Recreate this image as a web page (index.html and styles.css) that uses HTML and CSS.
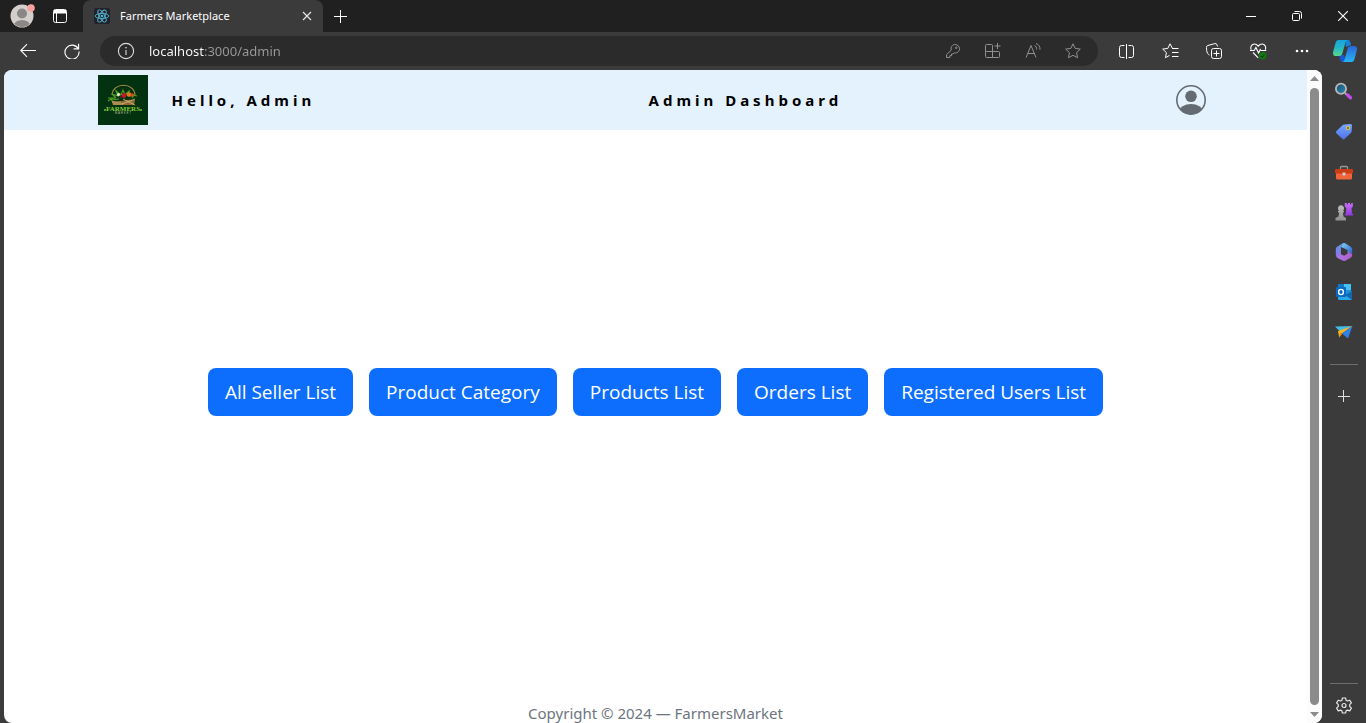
FILE: index.html
```html
<!DOCTYPE html>
<html lang="en">
<head>
<meta charset="utf-8">
<meta name="viewport" content="width=device-width, initial-scale=1">
<title>Farmers Marketplace</title>
<link rel="stylesheet" href="styles.css">
</head>
<body>
<div class="browser">
  <header class="titlebar">
    <button class="profile" aria-label="Profile">
      <svg width="26" height="26" viewBox="0 0 26 26"><defs><clipPath id="face"><circle cx="13" cy="13" r="11"/></clipPath></defs><circle cx="13" cy="13" r="11.5" fill="#d3d0cc"/><g clip-path="url(#face)" fill="#8a8886"><circle cx="13" cy="10.500" r="5"/><ellipse cx="13" cy="22.500" rx="8" ry="5.500"/></g><circle cx="22" cy="5" r="3.800" fill="#f9a19a"/></svg>
    </button>
    <button class="tab-menu" aria-label="Tab actions">
      <svg width="14" height="14" viewBox="0 0 14 14" fill="none" stroke="#fff"><rect x=".5" y=".5" width="13" height="13" rx="2"/><path d="M1 2h12M1 3.500h12" stroke-width="2"/><path d="M3.500 4v9.500"/></svg>
    </button>
    <div class="tab">
      <svg width="16" height="16" viewBox="0 0 16 16"><rect width="16" height="16" rx="2" fill="#20232a"/><g fill="none" stroke="#53b4d1" stroke-width=".9"><ellipse cx="8" cy="8" rx="6.800" ry="2.600"/><ellipse cx="8" cy="8" rx="6.800" ry="2.600" transform="rotate(60 8 8)"/><ellipse cx="8" cy="8" rx="6.800" ry="2.600" transform="rotate(120 8 8)"/></g><circle cx="8" cy="8" r="1.300" fill="#53b4d1"/></svg>
      <span class="tab-title">Farmers Marketplace</span>
      <button class="tab-close" aria-label="Close tab"><svg width="10" height="10" viewBox="0 0 10 10" stroke="#e6e6e6" stroke-width="1.200"><path d="M1 1l8 8M9 1L1 9"/></svg></button>
    </div>
    <button class="new-tab" aria-label="New tab"><svg width="13" height="13" viewBox="0 0 13 13" stroke="#fff"><path d="M6.500 0v13M0 6.500h13"/></svg></button>
    <div class="window-buttons">
      <button aria-label="Minimize"><svg width="10" height="10" viewBox="0 0 10 10" stroke="#fff"><path d="M0 5.500h10"/></svg></button>
      <button aria-label="Restore"><svg width="10" height="10" viewBox="0 0 10 10" fill="none" stroke="#fff"><rect x=".5" y="2.500" width="7" height="7" rx="1"/><path d="M2.500.5h5a2 2 0 0 1 2 2v5"/></svg></button>
      <button aria-label="Close"><svg width="10" height="10" viewBox="0 0 10 10" stroke="#fff" stroke-width="1.100"><path d="M0 0l10 10M10 0L0 10"/></svg></button>
    </div>
  </header>

  <div class="toolbar">
    <button class="tool" aria-label="Back"><svg width="16" height="14" viewBox="0 0 16 14" fill="none" stroke="#fff" stroke-width="1.100"><path d="M16 6.500H.8M7 .2L.8 6.500 7 12.800"/></svg></button>
    <button class="tool" aria-label="Refresh"><svg width="16" height="16" viewBox="0 0 17 17" fill="none" stroke="#fff" stroke-width="1.200"><path d="M15.300 6.500A7.500 7.500 0 1 0 16 9"/><path d="M15.500.7v5.600h-5.300"/></svg></button>
    <div class="address">
      <svg width="20" height="20" viewBox="0 0 20 20" fill="none" stroke="#ddd" stroke-width="1.100"><circle cx="10" cy="10" r="7.600"/><path d="M10 9v5"/><circle cx="10" cy="6.700" r=".5" fill="#ddd" stroke-width=".6"/></svg>
      <input class="url" type="text" value="localhost:3000/admin" aria-label="Address">
      <button class="hint" aria-label="Saved passwords"><svg width="14" height="14" viewBox="0 0 14 14" fill="none" stroke="#929292"><path d="M5.300 6.100C4.300 2.800 6.500.5 9.200.5c2.300 0 4.300 2 4.300 4.300 0 2.700-2.300 4.800-5.300 4L7 10H5.500v1.700H3.800v1.800H.5v-2.700z"/><circle cx="10.200" cy="3.800" r=".8"/></svg></button>
      <button class="hint" aria-label="Apps"><svg width="16" height="16" viewBox="0 0 16 16" fill="none" stroke="#929292"><path d="M7.500 8.500v6h6a1 1 0 0 0 1-1v-4a1 1 0 0 0-1-1zM7.500 8.500h-6a1 1 0 0 0-1 1v4a1 1 0 0 0 1 1h6M7.500 8.500v-6a1 1 0 0 0-1-1h-5a1 1 0 0 0-1 1v7M12.500 0v6M9.500 3h6"/></svg></button>
      <button class="hint" aria-label="Read aloud"><svg width="16" height="16" viewBox="0 0 16 16" fill="none" stroke="#929292"><path d="M1.100 14.500L6 2.500l5 12M2.800 10.500h6.500M9.500 2.500c1.500.8 2.200 2 2.200 4M11 .5c2.800 1 4.200 3.200 4 6.200"/></svg></button>
      <button class="hint" aria-label="Add to favorites"><svg width="16" height="16" viewBox="0 0 16 16" fill="none" stroke="#929292" stroke-linejoin="round"><path d="M8 .8l2.200 4.600 5.100.7-3.700 3.500.9 5.100L8 12.300l-4.500 2.400.9-5.100L.7 6.100l5.100-.7z"/></svg></button>
    </div>
    <button class="tool" aria-label="Split screen"><svg width="15" height="15" viewBox="0 0 15 15" fill="none" stroke="#fff"><path d="M5.500 1.500h-3a2 2 0 0 0-2 2v8a2 2 0 0 0 2 2h3M9.500 1.500h3a2 2 0 0 1 2 2v8a2 2 0 0 1-2 2h-3M7.500 0v15"/></svg></button>
    <button class="tool" aria-label="Favorites"><svg width="17" height="16" viewBox="0 0 17 16" fill="none" stroke="#fff" stroke-linejoin="round"><path d="M10.500 5.500L8 .8 5.800 5.400.7 6.100l3.700 3.500-.9 5.100 4-2.300M10 5.500h6.500M10 9.500h6.500M10 13.500h6.500"/></svg></button>
    <button class="tool" aria-label="Collections"><svg width="16" height="16" viewBox="0 0 16 16" fill="none" stroke="#fff"><rect x="5.500" y="5.500" width="10" height="10" rx="2"/><path d="M10.500 7.500v6M7.500 10.500h6M3.500 12C2 11.500.8 9.500.7 7.500L.4 4.700a2 2 0 0 1 1.500-2.200L8.700.6a2 2 0 0 1 2.400 1.500l.5 1.400"/></svg></button>
    <button class="tool" aria-label="Browser essentials"><svg width="17" height="17" viewBox="0 0 17 17" fill="none" stroke="#fff" stroke-width="1.100"><path d="M1.200 6.700C.2 4.300 1.300 1 4.500 1c1.700 0 2.800 1 3.700 2.200C9.200 2 10.300 1 12 1c3.200 0 4.300 3.300 3.300 5.700M3 9.500l5.200 5.300M0 7.500h4.200l1.700-3 2.700 5.500 1.700-3.500.8 1h5.200"/><circle cx="12.700" cy="12.800" r="3.700" fill="#107c10" stroke="none"/><path d="M11 13l1.200 1.200 2.200-2.700" stroke="#0a3d0a"/></svg></button>
    <button class="tool" aria-label="Settings and more"><svg width="14" height="4" viewBox="0 0 14 4" fill="#fff"><circle cx="2" cy="2" r="1.300"/><circle cx="7" cy="2" r="1.300"/><circle cx="12" cy="2" r="1.300"/></svg></button>
    <button class="copilot" aria-label="Copilot"><svg width="24" height="22" viewBox="0 0 24 22"><defs><linearGradient id="cpa" x2="0" y2="1"><stop stop-color="#16a2e0"/><stop offset=".5" stop-color="#23b8c4"/><stop offset="1" stop-color="#58d98c"/></linearGradient><linearGradient id="cpb" x2="0" y2="1"><stop stop-color="#2867dd"/><stop offset="1" stop-color="#27b5f4"/></linearGradient></defs><path d="M6 15h5l2 7H10c-3 0-3-3-4-7z" fill="#1757d5"/><path d="M12 0h3c2 0 2.500 2 3 5l-5 2z" fill="#1683d8"/><path d="M5.500 0H15c-2 0-2.500 2-3 4L9.500 13c-.6 2-1.500 3-3.500 3H3c-2.500 0-3.500-2-2.800-4.500L2.500 3C3 1 4 0 5.500 0z" fill="url(#cpa)"/><path d="M18.500 22H9c2 0 2.500-2 3-4L14.500 9c.6-2 1.500-3 3.500-3h3c2.500 0 3.500 2 2.800 4.500L21.500 19c-.5 2-1.500 3-3 3z" fill="url(#cpb)"/></svg></button>
  </div>

  <div class="workspace">
    <div class="viewport">
      <div class="page">
        <nav class="navbar">
          <div class="navbar-inner">
            <div class="brand">
              <svg class="logo" width="50" height="50" viewBox="0 0 50 50" role="img" aria-label="Farmers Market"><rect width="50" height="50" fill="#02320f"/><path d="M14 20C15 7 36 7 37 20" stroke="#a98a4d" stroke-width="1.100" fill="none"/><path d="M13 25q6 3 11 1t13-1l-1 5H15z" fill="#8f6c34"/><path d="M14 27h9M15 29h10M25 24l12 6M24 29l13-5" stroke="#d8bd7e" stroke-width=".8"/><path d="M10 26q5-4 8-3l-4-4 6 2-2-5 5 4 2-5 2 5 4-4v5l5-1-2 3M10 23h8M35 20l4 1M13 25l8-1" stroke="#4c9c24" stroke-width="1.200" fill="none"/><circle cx="20.500" cy="19.500" r="1.600" fill="#e8e9d6"/><circle cx="26" cy="20.500" r="2.400" fill="#b82021"/><circle cx="31" cy="19.500" r="2.300" fill="#e27a1d"/><circle cx="34" cy="20" r="1.800" fill="#d94c21"/><circle cx="23" cy="22" r="1.500" fill="#591a37"/><text x="25" y="36" text-anchor="middle" class="logo-name">FARMERS</text><text x="25" y="39" text-anchor="middle" class="logo-sub">M A R K E T</text><path d="M6 35h2M42 35h2" stroke="#71bd2c" stroke-width="1.500"/></svg>
              <span class="nav-text">Hello, Admin</span>
            </div>
            <span class="nav-text">Admin Dashboard</span>
            <button class="account" aria-label="Account"><svg width="30" height="30" viewBox="0 0 30 30"><defs><clipPath id="acc"><circle cx="15" cy="15" r="14.500"/></clipPath></defs><g clip-path="url(#acc)" fill="#646b72"><circle cx="15" cy="11.300" r="5.800"/><ellipse cx="15" cy="27" rx="11.800" ry="8"/></g><circle cx="15" cy="15" r="14.200" fill="none" stroke="#646b72" stroke-width="1.600"/></svg></button>
          </div>
        </nav>
        <main class="actions">
          <button class="btn">All Seller List</button>
          <button class="btn">Product Category</button>
          <button class="btn">Products List</button>
          <button class="btn">Orders List</button>
          <button class="btn">Registered Users List</button>
        </main>
        <footer class="footer">Copyright © 2024 — FarmersMarket</footer>
      </div>
      <div class="scrollbar">
        <svg width="9" height="5" viewBox="0 0 9 5" fill="#8b8b8b"><path d="M4.500 0L9 5H0z"/></svg>
        <div class="thumb"></div>
        <svg width="9" height="5" viewBox="0 0 9 5" fill="#8b8b8b"><path d="M4.500 5L9 0H0z"/></svg>
      </div>
    </div>

    <aside class="sidebar">
      <button aria-label="Search"><svg width="20" height="20" viewBox="0 0 20 20"><defs><linearGradient id="sg" x2="1" y2="1"><stop stop-color="#174e70"/><stop offset="1" stop-color="#2f89b4"/></linearGradient></defs><path d="M11 11l2.500 2.500" stroke="#aaa" stroke-width="2"/><path d="M13.500 13l3 2.800" stroke="#c64bea" stroke-width="3.300" stroke-linecap="round"/><circle cx="7" cy="6.800" r="5.100" fill="url(#sg)" stroke="#b9b9b9" stroke-width="1.800"/></svg></button>
      <button aria-label="Shopping"><svg width="20" height="20" viewBox="0 0 20 20"><defs><linearGradient id="tg" x2="0" y2="1"><stop stop-color="#78a9ff"/><stop offset="1" stop-color="#4f70e8"/></linearGradient></defs><path d="M10.500 2.500L16.500 2q1.500 0 1.500 1.500l-.4 5.700q0 1-.8 1.800l-6 5.800q-1.300 1.200-2.500 0L2.500 11.500q-1.200-1.200 0-2.500l6-5.700q.8-.8 2-.8z" fill="url(#tg)"/><circle cx="14" cy="6" r="1.500" fill="#344a92" stroke="#f4ca25" stroke-width="1.200"/></svg></button>
      <button aria-label="Tools"><svg width="20" height="20" viewBox="0 0 20 20"><path d="M6.500 7V5.500q0-1 1-1h5q1 0 1 1V7" fill="none" stroke="#999" stroke-width="1.300"/><path d="M2 10h16v6q0 1.500-1.500 1.500h-13Q2 17.500 2 16z" fill="#ef6438"/><rect x="1" y="7" width="18" height="4.500" rx="1" fill="#cb3d14"/><circle cx="10" cy="12" r="1.700" fill="#ccc"/></svg></button>
      <button aria-label="Games"><svg width="20" height="20" viewBox="0 0 20 20"><defs><linearGradient id="rk" x2="0" y2="1"><stop stop-color="#cc70ff"/><stop offset="1" stop-color="#9038d8"/></linearGradient><linearGradient id="pw" x2="0" y2="1"><stop stop-color="#bcbcbc"/><stop offset="1" stop-color="#909090"/></linearGradient></defs><path d="M10.800 1h2v1.500h1.200V1h2v1.500h1.200V1h1.600v3.700L17.500 6l.4 5.200 1.100.8v1.500h-8V12l1-.8L12.300 6l-1.500-1.300z" fill="url(#rk)"/><path d="M7 3.200a3.200 3.200 0 0 1 2 5.600l1 .2v1.500H8.800l.7 4 2.500 1.500v2.500H1.500V16l3-1.500.7-4H4V9l1-.2a3.200 3.200 0 0 1 2-5.600z" fill="url(#pw)"/></svg></button>
      <button aria-label="Microsoft 365"><svg width="20" height="20" viewBox="0 0 20 20"><defs><linearGradient id="ma" x2="1" y2="1"><stop stop-color="#7ed9f4"/><stop offset="1" stop-color="#2c54c8"/></linearGradient><linearGradient id="mb" x2="1"><stop stop-color="#a878ea"/><stop offset="1" stop-color="#b65cc6"/></linearGradient><linearGradient id="mc" x2="0" y2="1"><stop stop-color="#5a9ae8"/><stop offset="1" stop-color="#9b6ce0"/></linearGradient></defs><path d="M8 1.700q2-1.200 4 0l4.700 3q1.500 1 1.500 2.700V13l-4.700-2.700V8L7 5z" fill="url(#ma)"/><path d="M8 1.700q1-.5 2-.5L7 5v7.500L3.500 16Q1.800 15 1.800 13V7.200q0-1.500 1.300-2.400z" fill="url(#mc)"/><path d="M3 15.700L6.500 12l3.700 1.700 3.500-2.200V9.800l4.500 2.500q.2 2.200-1.200 3.100l-4.800 2.900q-2 1.200-4.200 0z" fill="url(#mb)"/></svg></button>
      <button aria-label="Outlook"><svg width="20" height="20" viewBox="0 0 20 20"><rect x="4" y="2" width="13" height="14" rx="1" fill="#1d91dc"/><path d="M10 2h7v6h-7z" fill="#45c3f3"/><path d="M4 2h6v4H4z" fill="#1579c4"/><path d="M18 9v8q0 1-1 1H5q-1 0-1-1v-2l8-1z" fill="#28a7e8"/><path d="M18 9v9l-7-5z" fill="#1268af"/><rect x="2" y="5" width="10" height="10" rx="1" fill="#0869c4"/><ellipse cx="7" cy="10" rx="2.400" ry="2.600" fill="none" stroke="#fff" stroke-width="1.400"/></svg></button>
      <button aria-label="Drop"><svg width="20" height="20" viewBox="0 0 20 20"><path d="M1 4.500L18.500 4 6 9.500z" fill="#42bce9"/><path d="M18.500 4L4 9l1.200 6.500L8 11.500z" fill="#f8b622"/><path d="M6.500 10.500l2 1-3.300 4z" fill="#da850e"/><path d="M18.500 4L14 16.500 8 11.500z" fill="#2f82e8"/></svg></button>
      <hr class="rule">
      <button aria-label="Customize"><svg width="12" height="12" viewBox="0 0 12 12" stroke="#e0e0e0"><path d="M5.500 0v12M0 6.500h12"/></svg></button>
      <div class="spacer"></div>
      <hr class="rule rule-bottom">
      <button class="gear" aria-label="Settings"><svg width="18" height="18" viewBox="0 0 18 18" fill="none" stroke="#e8e8e8" stroke-width="1.200" stroke-linejoin="round"><path d="M7.400 1h3.200l.5 2.300 1.300.7 2.300-.8 1.700 2.700-1.700 1.700v1.800l1.700 1.700-1.700 2.800-2.300-.8-1.300.7-.5 2.200H7.400l-.5-2.200-1.300-.7-2.300.8-1.700-2.800 1.700-1.700V7.600L1.600 5.900l1.700-2.700 2.300.8 1.300-.7z"/><circle cx="9" cy="8.500" r="2"/></svg></button>
    </aside>
  </div>
</div>
</body>
</html>
```
FILE: styles.css
```css
* { box-sizing: border-box; }

body {
  margin: 0;
  font-family: "Segoe UI", "Noto Sans", "Open Sans", sans-serif;
}

button {
  display: flex;
  align-items: center;
  justify-content: center;
  padding: 0;
  border: 0;
  background: none;
  font: inherit;
  cursor: pointer;
}

svg { display: block; flex: none; }

.browser {
  display: flex;
  flex-direction: column;
  height: 100vh;
  background: #3b3b3b;
}

/* Title bar */
.titlebar {
  display: flex;
  flex: none;
  height: 32px;
  background: #202020;
}
.profile { width: 44px; }
.tab-menu { width: 32px; }
.tab {
  display: flex;
  align-items: center;
  width: 240px;
  margin-left: 7px;
  padding: 0 6px 0 11px;
  gap: 10px;
  border-radius: 8px 8px 0 0;
  background: #3b3b3b;
  color: #fff;
  font-size: 11px;
}
.tab-title { flex: 1; line-height: 16px; white-space: nowrap; }
.tab-close { width: 20px; height: 20px; }
.new-tab { width: 35px; }
.window-buttons { display: flex; margin-left: auto; }
.window-buttons button { width: 46px; }

/* Toolbar */
.toolbar {
  display: flex;
  flex: none;
  align-items: center;
  height: 38px;
  padding-left: 6px;
}
.tool { width: 44px; height: 32px; }
.address {
  display: flex;
  flex: 1;
  align-items: center;
  min-width: 0;
  height: 30px;
  margin: 0 6px;
  padding: 0 5px 0 16px;
  border-radius: 15px;
  background: #2b2b2b;
}
.url {
  flex: 1;
  min-width: 0;
  margin-left: 13px;
  padding: 0;
  border: 0;
  outline: 0;
  font-family: inherit;
  font-size: 13px;
  background: linear-gradient(90deg, #fff 55px, #9a9a9a 55px);
  -webkit-background-clip: text;
  background-clip: text;
  -webkit-text-fill-color: transparent;
}
.hint { width: 40px; height: 30px; }
.copilot { width: 42px; height: 32px; }

/* Web page area */
.workspace {
  display: flex;
  flex: 1;
  min-height: 0;
  padding-left: 4px;
}
.viewport {
  display: flex;
  flex: 1;
  min-width: 0;
  overflow: hidden;
  border-radius: 8px;
  background: #fff;
}
.page {
  display: flex;
  flex: 1;
  flex-direction: column;
  min-width: 0;
}
.navbar { background: #e3f2fd; }
.navbar-inner {
  display: flex;
  align-items: center;
  justify-content: space-between;
  max-width: 1140px;
  min-height: 60px;
  margin: 0 auto;
  padding: 0 12px;
}
.brand { display: flex; align-items: center; gap: 24px; }
.logo-name {
  font: bold 7px "Liberation Serif", serif;
  fill: #85cb32;
}
.logo-sub {
  font: 3px "Liberation Sans", sans-serif;
  fill: #b6b98c;
}
.nav-text {
  color: #000;
  font-size: 15px;
  font-weight: 700;
  letter-spacing: 4px;
}
.account { padding-right: 8px; }

.actions {
  display: flex;
  flex: 1;
  flex-wrap: wrap;
  align-items: center;
  align-content: center;
  justify-content: center;
  gap: 16px;
}
.btn {
  min-height: 48px;
  padding: 0 17px;
  border-radius: 8px;
  background: #0d6efd;
  color: #fff;
  font-family: "Segoe UI", "Open Sans", sans-serif;
  font-size: 19px;
  line-height: 30px;
}
.footer {
  padding: 50px 0 1px;
  color: #6c757d;
  font-size: 15px;
  line-height: 18px;
  text-align: center;
}

.scrollbar {
  display: flex;
  flex-direction: column;
  align-items: center;
  width: 15px;
  padding: 6px 0;
  gap: 7px;
  background: #fcfcfc;
}
.thumb {
  flex: 1;
  width: 9px;
  border-radius: 5px;
  background: #8b8b8b;
}

/* Sidebar */
.sidebar {
  display: flex;
  flex: none;
  flex-direction: column;
  align-items: center;
  width: 44px;
  padding-top: 2px;
}
.sidebar button { flex: none; width: 40px; height: 40px; }
.rule {
  width: 28px;
  height: 1px;
  margin: 12px 0 11px;
  border: 0;
  background: #6e6e6e;
}
.spacer { flex: 1; }
.rule-bottom { margin: 0 0 5px; }
.sidebar .gear { height: 34px; }
```
